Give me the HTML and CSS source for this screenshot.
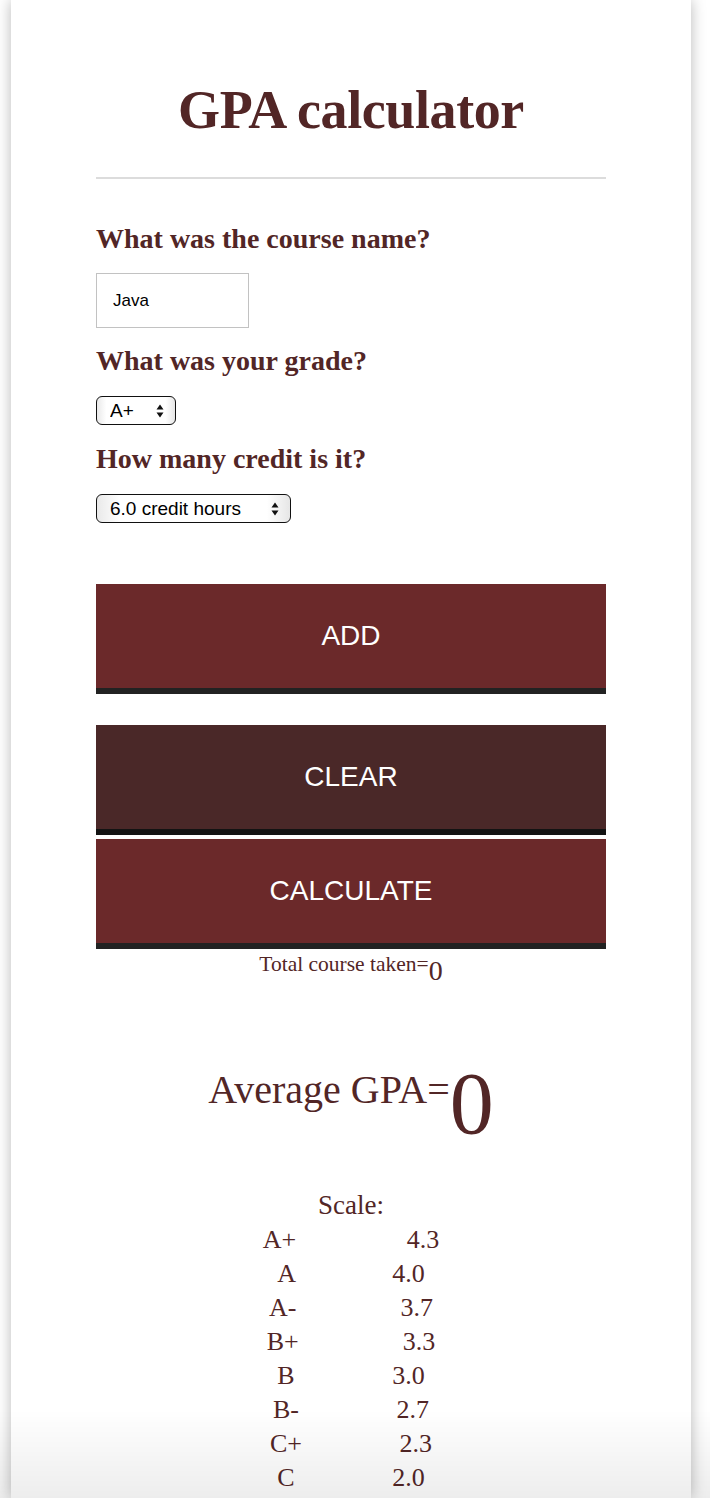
FILE: index.html
```html
<!DOCTYPE html>
<html lang="en">
<head>
<meta charset="utf-8">
<title>GPA calculator</title>
<link rel="stylesheet" href="styles.css">
</head>
<body>
<div class="page">
  <h1 class="title">GPA calculator</h1>
  <hr class="rule">
  <form class="form">
    <label class="question" for="course">What was the course name?</label>
    <input class="course-input" id="course" type="text" value="Java">
    <label class="question" for="grade">What was your grade?</label>
    <div class="select-wrap">
      <select class="select select-grade" id="grade">
        <option>A+</option><option>A</option><option>A-</option><option>B+</option>
        <option>B</option><option>B-</option><option>C+</option><option>C</option>
      </select>
      <svg class="select-arrows" viewBox="0 0 8 14" aria-hidden="true"><path d="M4 0.5L7.5 5.5H0.5Z M4 13.5L0.5 8.5H7.5Z"/></svg>
    </div>
    <label class="question question-credit" for="credit">How many credit is it?</label>
    <div class="select-wrap">
      <select class="select select-credit" id="credit">
        <option>6.0 credit hours</option><option>3.0 credit hours</option>
      </select>
      <svg class="select-arrows" viewBox="0 0 8 14" aria-hidden="true"><path d="M4 0.5L7.5 5.5H0.5Z M4 13.5L0.5 8.5H7.5Z"/></svg>
    </div>
  </form>
  <div class="actions">
    <button class="btn btn-add" type="button">ADD</button>
    <button class="btn btn-clear" type="button">CLEAR</button>
    <button class="btn btn-calc" type="button">CALCULATE</button>
  </div>
  <p class="total">Total course taken=<span class="total-num">0</span></p>
  <p class="average">Average GPA=<span class="average-num">0</span></p>
  <div class="scale">
    <div class="scale-title">Scale:</div>
    <div class="scale-row">A+                 4.3</div>
    <div class="scale-row">A               4.0</div>
    <div class="scale-row">A-                3.7</div>
    <div class="scale-row">B+                3.3</div>
    <div class="scale-row">B               3.0</div>
    <div class="scale-row">B-               2.7</div>
    <div class="scale-row">C+               2.3</div>
    <div class="scale-row">C               2.0</div>
  </div>
</div>
</body>
</html>
```
FILE: styles.css
```css
html, body {
  margin: 0;
  padding: 0;
  background: #ffffff;
}

body {
  font-family: "Liberation Serif", "Times New Roman", serif;
  color: #522626;
  overflow: hidden;
}

body::after {
  content: "";
  position: fixed;
  left: 0;
  right: 0;
  bottom: 0;
  height: 88px;
  background: linear-gradient(rgba(0, 0, 0, 0), rgba(0, 0, 0, 0.07));
  pointer-events: none;
}

.page {
  box-sizing: border-box;
  width: 680px;
  height: 100vh;
  margin-left: 11px;
  padding: 79px 85px 0;
  background: #ffffff;
  box-shadow: 0 0 14px rgba(0, 0, 0, 0.28);
  overflow: hidden;
}

.title {
  margin: 0;
  font-size: 54px;
  line-height: 62px;
  font-weight: bold;
  letter-spacing: -0.4px;
  text-align: center;
}

.rule {
  margin: 36px 0 0;
  border: 0;
  height: 2px;
  background: #dcdcdc;
}

.form {
  margin: 0;
}

.question {
  display: block;
  margin-top: 44px;
  font-size: 28px;
  line-height: 32px;
  font-weight: bold;
}

.question + .select-wrap {
  margin-top: 19px;
}

.course-input + .question {
  margin-top: 17px;
}

.select-wrap + .question {
  margin-top: 18px;
}

.course-input {
  display: block;
  box-sizing: border-box;
  margin-top: 18px;
  width: 153px;
  height: 55px;
  padding: 0 0 0 16px;
  border: 1px solid #c2c2c2;
  border-radius: 0;
  font-family: "Liberation Sans", Arial, sans-serif;
  font-size: 17px;
  color: #000;
  background: #fff;
}

.select-wrap {
  position: relative;
  width: fit-content;
}

.select {
  display: block;
  box-sizing: border-box;
  height: 29px;
  margin: 0;
  padding: 0 0 0 13px;
  border: 1.5px solid #111;
  border-radius: 6px;
  appearance: none;
  -webkit-appearance: none;
  background: linear-gradient(to right, #e9e9e9 0%, #ffffff 12%, #ffffff 88%, #e6e6e6 100%);
  font-family: "Liberation Sans", Arial, sans-serif;
  font-size: 19px;
  color: #000;
}

.select-grade {
  width: 80px;
}

.select-credit {
  width: 195px;
}

.select-arrows {
  position: absolute;
  right: 12px;
  top: 8px;
  width: 8px;
  height: 14px;
  fill: #111;
  pointer-events: none;
}

.actions {
  display: flex;
  flex-direction: column;
  margin-top: 61px;
}

.btn {
  box-sizing: border-box;
  display: block;
  width: 100%;
  height: 110px;
  margin: 0;
  padding: 0;
  border: 0;
  border-bottom: 6px solid #222222;
  font-family: "Liberation Sans", Arial, sans-serif;
  font-size: 28px;
  color: #ffffff;
  background: #6b292a;
  text-align: center;
}

.btn-clear {
  margin-top: 31px;
  background: #4a2828;
  border-bottom-color: #131313;
}

.btn-calc {
  margin-top: 4px;
}

.total {
  margin: 3px 0 0;
  font-size: 21.5px;
  line-height: 24px;
  text-align: center;
}

.total-num {
  font-size: 28px;
  line-height: 0;
  vertical-align: -9px;
}

.average {
  margin: 91px 0 0;
  font-size: 40px;
  line-height: 46px;
  text-align: center;
}

.average-num {
  font-size: 88px;
  line-height: 0;
  vertical-align: -30px;
}

.scale {
  margin-top: 77px;
  text-align: center;
}

.scale-title {
  font-size: 27px;
  line-height: 31px;
  margin-bottom: 2px;
}

.scale-row {
  font-size: 26px;
  line-height: 34px;
  white-space: pre;
}
```
